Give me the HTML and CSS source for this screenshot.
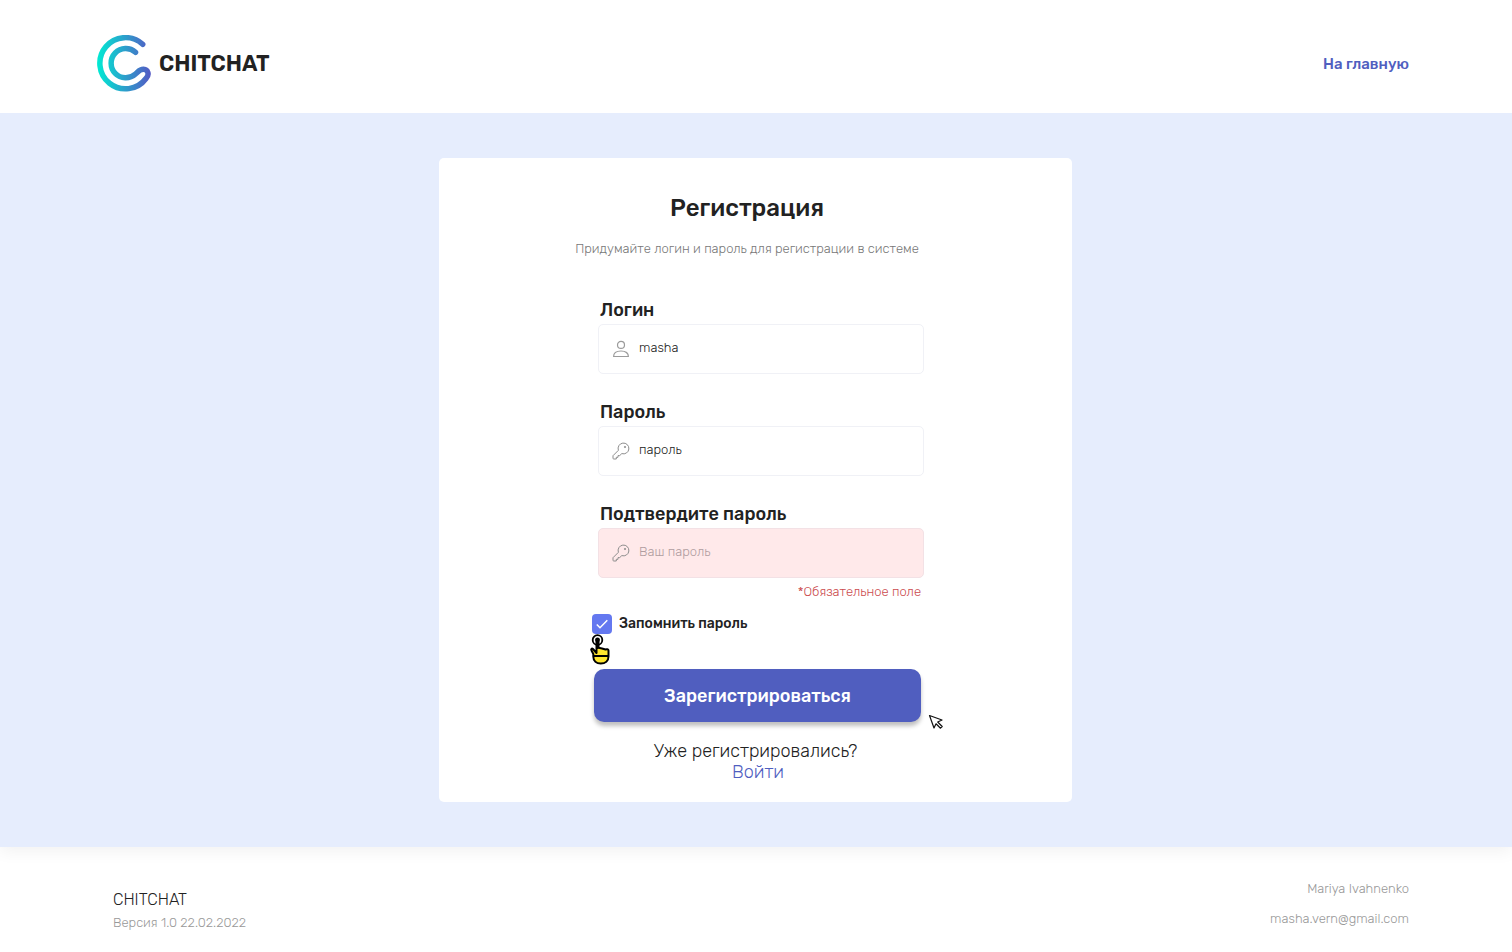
FILE: index.html
```
<!DOCTYPE html>
<html lang="ru">
<head>
<meta charset="utf-8">
<meta name="viewport" content="width=device-width, initial-scale=1">
<title>CHITCHAT</title>
<link rel="stylesheet" href="styles.css">
</head>
<body>
<header class="header">
  <a class="logo" href="#">
    <svg class="logo-mark" viewBox="0 0 54 57" aria-hidden="true">
      <defs>
        <linearGradient id="brand" gradientUnits="userSpaceOnUse" x1="0" y1="28" x2="54" y2="28">
          <stop offset="0" stop-color="#00ebd3"/>
          <stop offset="1" stop-color="#5558c4"/>
        </linearGradient>
      </defs>
      <path d="M45.7 9.3A25.6 25.6 0 1 0 49 43.500C52.800 39.500 51 34.500 46.500 34.300C42.500 34.200 41.500 36.500 38.500 39A14.6 14.6 0 1 1 38.5 17.3" fill="none" stroke="url(#brand)" stroke-width="5.5" stroke-linecap="round"/>
    </svg>
    <span class="logo-name">CHITCHAT</span>
  </a>
  <a class="home-link" href="#">На главную</a>
</header>

<main class="main">
  <section class="card">
    <div class="intro">
      <h1 class="title">Регистрация</h1>
      <p class="subtitle">Придумайте логин и пароль для регистрации в системе</p>
    </div>
    <form class="form">
      <div class="fields">
        <div class="field">
          <label class="label" for="login">Логин</label>
          <div class="box">
            <svg class="icon" viewBox="0 0 18 18" aria-hidden="true"><g fill="none" stroke="#9b9b9b" stroke-width="1.2"><circle cx="9" cy="4.9" r="3.5"/><path d="M1.6 16.5C1.6 13 4.6 11 9 11s7.400 2 7.400 5.500Z" stroke-linejoin="round"/></g></svg>
            <input class="input" id="login" type="text" value="masha">
          </div>
        </div>
        <div class="field">
          <label class="label" for="password">Пароль</label>
          <div class="box">
            <svg class="icon" viewBox="0 0 18 18" aria-hidden="true"><path class="key" d="M6.400 8.300L1 13.700V16.200Q1 17 1.800 17H4.300V15.300H6V13.600H7.700L9.800 11.600A5.400 5.400 0 1 0 6.400 8.300Z"/><circle class="key" cx="13" cy="5" r=".7"/></svg>
            <input class="input" id="password" type="text" value="пароль">
          </div>
        </div>
        <div class="field">
          <label class="label" for="confirm">Подтвердите пароль</label>
          <div class="box box-error">
            <svg class="icon" viewBox="0 0 18 18" aria-hidden="true"><path class="key" d="M6.400 8.300L1 13.700V16.200Q1 17 1.800 17H4.300V15.300H6V13.600H7.700L9.800 11.600A5.400 5.400 0 1 0 6.400 8.300Z"/><circle class="key" cx="13" cy="5" r=".7"/></svg>
            <input class="input" id="confirm" type="text" placeholder="Ваш пароль" aria-describedby="confirm-error">
          </div>
        </div>
      </div>
      <p class="error" id="confirm-error">*Обязательное поле</p>
      <div class="remember">
        <span class="check">
          <input class="check-input" id="remember" type="checkbox" checked>
          <svg class="check-tick" viewBox="0 0 20 20" aria-hidden="true"><path d="M4.800 10.500L8 13.700L15.300 6.300" fill="none" stroke="#fff" stroke-width="1.500"/></svg>
        </span>
        <label class="remember-label" for="remember">Запомнить пароль</label>
        <svg class="hand" viewBox="0 0 22 32" aria-hidden="true">
          <circle cx="8.500" cy="7" r="4.800" fill="#fff" stroke="#000" stroke-width="1.800"/>
          <circle cx="8.500" cy="6.800" r="2.400"/>
          <path d="M7.500 7V20L4 16C2.800 15 1.700 16.300 2.500 17.600L4.300 21V23.500C4.300 28 7.500 30.500 11.800 30.500S19.500 28 19.500 23.500V17.500C19.500 16 17.500 16 16.500 16.500L13 15.500L9.500 14.800V7Z" fill="#ffe62e" stroke="#000" stroke-width="2" stroke-linejoin="round"/>
          <path d="M4.500 23H19.500M8.500 7V16" fill="none" stroke="#000" stroke-width="1.800"/>
        </svg>
      </div>
      <div class="submit-row">
        <button class="submit" type="button">Зарегистрироваться</button>
        <svg class="arrow" viewBox="0 0 16 16" aria-hidden="true"><path d="M1.500 1.500L14 6L9.700 8L14.200 12.500L12.500 14.200L8 9.800L6 14Z" fill="#fff" stroke="#111" stroke-width="1.200" stroke-linejoin="round"/></svg>
      </div>
    </form>
    <div class="login">
      <p class="login-text">Уже регистрировались?</p>
      <a class="login-link" href="#">Войти</a>
    </div>
  </section>
</main>

<footer class="footer">
  <div class="about">
    <p class="about-name">CHITCHAT</p>
    <p class="note">Версия 1.0 22.02.2022</p>
  </div>
  <div class="contacts">
    <p class="note">Mariya Ivahnenko</p>
    <a class="note" href="mailto:masha.vern@gmail.com">masha.vern@gmail.com</a>
  </div>
</footer>
</body>
</html>
```

FILE: styles.css
```
* {
  box-sizing: border-box;
}

body {
  margin: 0;
  min-height: 100vh;
  display: flex;
  flex-direction: column;
  background: #fff;
  color: #222;
  font-family: Rubik, Inter, "Noto Sans", sans-serif;
  font-size: 13px;
  line-height: 16px;
}

h1,
p {
  margin: 0;
}

a {
  color: inherit;
  text-decoration: none;
}

.header {
  position: relative;
  z-index: 1;
  display: flex;
  align-items: center;
  justify-content: space-between;
  padding: 35px 103px 21px 97px;
  background: #fff;
}

.logo {
  display: flex;
  align-items: center;
  gap: 8px;
}

.logo-mark {
  width: 54px;
  height: 57px;
}

.logo-name {
  font-size: 22px;
  font-weight: 600;
  line-height: 28px;
}

.home-link {
  color: #505ebf;
  font-size: 15px;
  font-weight: 500;
}

.main {
  flex: 1;
  display: flex;
  justify-content: center;
  align-items: center;
  padding: 45px 17px 45px 16px;
  background: #e6edfd;
  box-shadow: 0 4px 16px rgba(0, 0, 0, 0.06);
}

.card {
  width: 100%;
  max-width: 633px;
  display: flex;
  flex-direction: column;
  align-items: center;
  padding: 36px 16px 19px;
  border-radius: 5px;
  background: #fff;
}

.intro {
  display: flex;
  flex-direction: column;
  gap: 19px;
  padding-right: 17px;
  text-align: center;
}

.title {
  font-size: 24px;
  font-weight: 500;
  line-height: 28px;
}

.subtitle {
  color: #777;
  font-weight: 300;
}

.form {
  width: 100%;
  max-width: 337px;
  padding-left: 5px;
  margin-top: 41px;
}

.fields {
  display: flex;
  flex-direction: column;
  gap: 26px;
  padding-left: 6px;
}

.field {
  display: flex;
  flex-direction: column;
  gap: 2px;
}

.label {
  padding-left: 2px;
  font-size: 18px;
  font-weight: 500;
  line-height: 24px;
}

.box {
  display: flex;
  align-items: center;
  gap: 9px;
  height: 50px;
  padding: 0 13px;
  border: 1px solid #f0f1f6;
  border-radius: 5px;
}

.box-error {
  border-color: #f3e1e5;
  background: #ffe9ea;
}

.icon {
  flex: none;
  width: 18px;
  height: 18px;
}

.key {
  fill: none;
  stroke: #8d8d8d;
  stroke-width: 1;
  stroke-linejoin: round;
}

.input {
  flex: 1;
  min-width: 0;
  padding: 0 0 2px;
  border: 0;
  outline: 0;
  background: transparent;
  color: #222;
  font: inherit;
  font-weight: 300;
}

.input::placeholder {
  color: #b09da0;
  opacity: 1;
}

.error {
  padding: 6px 3px 0 0;
  color: #cb4b4e;
  font-weight: 300;
  text-align: right;
}

.remember {
  position: relative;
  display: flex;
  align-items: center;
  gap: 7px;
  margin-top: 14px;
}

.check {
  display: grid;
}

.check-input,
.check-tick {
  grid-area: 1 / 1;
  width: 20px;
  height: 20px;
  margin: 0;
}

.check-input {
  appearance: none;
  border-radius: 4px;
  background: #6478f0;
}

.check-tick {
  pointer-events: none;
  visibility: hidden;
}

.check-input:checked + .check-tick {
  visibility: visible;
}

.remember-label {
  font-size: 14px;
  font-weight: 500;
  line-height: 20px;
}

.hand {
  position: absolute;
  top: 19px;
  left: -3px;
  width: 22px;
  height: 32px;
}

.submit-row {
  position: relative;
  margin: 35px 3px 0 2px;
}

.submit {
  display: block;
  width: 100%;
  padding: 15px 16px 14px;
  border: 0;
  border-radius: 10px;
  background: #505ebf;
  box-shadow: 0 4px 4px rgba(0, 0, 0, 0.25);
  color: #fff;
  font: inherit;
  font-size: 18px;
  font-weight: 500;
  line-height: 24px;
}

.arrow {
  position: absolute;
  top: 45px;
  right: -23px;
  width: 16px;
  height: 16px;
}

.login {
  margin-top: 19px;
  font-size: 18px;
  font-weight: 300;
  line-height: 21px;
  text-align: center;
}

.login-link {
  padding-left: 5px;
  color: #505ebf;
}

.footer {
  display: flex;
  justify-content: space-between;
  padding: 34px 103px 21px 113px;
}

.about {
  display: flex;
  flex-direction: column;
  gap: 5px;
  padding-top: 9px;
}

.about-name {
  font-size: 16px;
  font-weight: 300;
  line-height: 20px;
}

.contacts {
  display: flex;
  flex-direction: column;
  align-items: flex-end;
  gap: 14px;
}

.note {
  color: #999;
  font-weight: 300;
}
```
